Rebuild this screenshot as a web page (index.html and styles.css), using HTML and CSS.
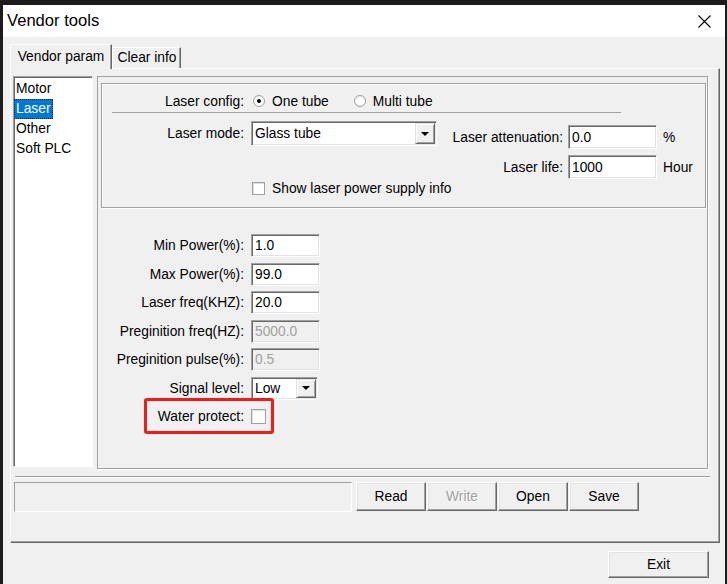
FILE: index.html
```html
<!DOCTYPE html>
<html lang="en">
<head>
    <meta charset="UTF-8">
    <title>Vendor tools</title>
    <link rel="stylesheet" href="styles.css">
</head>
<body>

<div class="window">
    <div class="titlebar">
        <span class="title">Vendor tools</span>
        <span class="close">
            <svg width="13" height="13" viewBox="0 0 13 13"><path d="M0.5 0.5 L12.5 12.5 M12.5 0.5 L0.5 12.5" stroke="#000" stroke-width="1.1" fill="none"/></svg>
        </span>
    </div>

    <div class="client">
        <div class="tabs">
            <div class="tab active">Vendor param</div>
            <div class="tab">Clear info</div>
        </div>

        <div class="pane">
            <div class="pane-main">
                <ul class="listbox">
                    <li><span>Motor</span></li>
                    <li class="sel"><span>Laser</span></li>
                    <li><span>Other</span></li>
                    <li><span>Soft PLC</span></li>
                </ul>

                <div class="page">
                    <div class="group">
                        <div class="cfg-row">
                            <span class="lbl">Laser config:</span>
                            <label class="radio"><span class="dot on"></span>One tube</label>
                            <label class="radio second"><span class="dot"></span>Multi tube</label>
                        </div>
                        <div class="sep"></div>
                        <div class="mode-row">
                            <div class="mode-left">
                                <span class="lbl">Laser mode:</span>
                                <div class="combo glass"><span class="val">Glass tube</span><span class="drop"></span></div>
                            </div>
                            <div class="atten">
                                <span class="lbl2">Laser attenuation:</span>
                                <div class="edit">0.0</div>
                                <span class="unit">%</span>
                                <span class="lbl2">Laser life:</span>
                                <div class="edit">1000</div>
                                <span class="unit">Hour</span>
                            </div>
                        </div>
                        <label class="check-row"><span class="box"></span>Show laser power supply info</label>
                    </div>

                    <div class="params">
                        <span class="lbl">Min Power(%):</span>
                        <div class="edit">1.0</div>
                        <span class="lbl">Max Power(%):</span>
                        <div class="edit">99.0</div>
                        <span class="lbl">Laser freq(KHZ):</span>
                        <div class="edit">20.0</div>
                        <span class="lbl">Preginition freq(HZ):</span>
                        <div class="edit disabled">5000.0</div>
                        <span class="lbl">Preginition pulse(%):</span>
                        <div class="edit disabled">0.5</div>
                        <span class="lbl">Signal level:</span>
                        <div class="combo small"><span class="val">Low</span><span class="drop"></span></div>
                        <span class="lbl">Water protect:</span>
                        <div class="cell"><span class="box big"></span></div>
                        <div class="mark"></div>
                    </div>
                </div>
            </div>

            <div class="etch"></div>

            <div class="actions">
                <div class="status"></div>
                <button class="btn">Read</button>
                <button class="btn off">Write</button>
                <button class="btn">Open</button>
                <button class="btn">Save</button>
            </div>
        </div>

        <div class="footer">
            <button class="btn exit">Exit</button>
        </div>
    </div>
</div>

</body>
</html>
```

FILE: styles.css
```css
body {
    margin: 0;
    padding: 5px 2px 0 3px;
    background-color: #1c1a1a;
    font-family: "Liberation Sans", Arial, sans-serif;
    font-size: 13.8px;
    color: #000;
    overflow: hidden;
}
.window {
    width: 722px;
    height: 579px;
    background-color: #f0f0f0;
}
.titlebar {
    height: 32px;
    background-color: #fff;
    display: flex;
    align-items: center;
    justify-content: space-between;
    padding: 0 14px 0 4px;
}
.title {
    font-size: 16.6px;
}
.close svg {
    display: block;
}
.client {
    padding: 7px 0 0 7px;
}

/* tabs */
.tabs {
    display: flex;
    align-items: flex-end;
    height: 24px;
}
.tab {
    box-sizing: border-box;
    height: 21px;
    width: 69px;
    line-height: 19px;
    text-align: center;
    border-top: 1px solid #fff;
    border-left: 1px solid #fff;
    border-right: 1px solid #696969;
    box-shadow: inset -1px 0 0 #a0a0a0;
    padding-left: 1px;
    white-space: nowrap;
}
.tab.active {
    position: relative;
    z-index: 1;
    width: 102px;
    height: 25px;
    line-height: 24px;
    margin-bottom: -1px;
    background-color: #f0f0f0;
    padding-left: 0;
}

/* tab page */
.pane {
    box-sizing: border-box;
    width: 710px;
    height: 475px;
    border-top: 1px solid #fff;
    border-left: 1px solid #fff;
    border-right: 1px solid #696969;
    border-bottom: 1px solid #696969;
    box-shadow: inset -1px -1px 0 #a0a0a0;
    padding: 7px 0 0 2px;
}
.pane-main {
    display: flex;
    align-items: flex-start;
    gap: 4px;
}
.listbox {
    box-sizing: border-box;
    list-style: none;
    margin: 0;
    padding: 1px 0 0 0;
    width: 80px;
    height: 391px;
    background-color: #fff;
    border-top: 1px solid #a0a0a0;
    border-left: 1px solid #a0a0a0;
    border-right: 1px solid #fff;
    border-bottom: 1px solid #fff;
    box-shadow: inset 1px 1px 0 #696969;
}
.listbox li {
    height: 20px;
}
.listbox li span {
    display: inline-block;
    line-height: 18px;
    padding: 0 1px;
    border: 1px solid transparent;
    margin-top: 1px;
}
.listbox li.sel span {
    background-color: #0078d7;
    color: #fff;
    border: 1px dotted #3a2a10;
}
.page {
    box-sizing: border-box;
    width: 611px;
    height: 393px;
    border: 1px solid #a0a0a0;
    box-shadow: 1px 1px 0 #fff;
}

/* laser config group */
.group {
    box-sizing: border-box;
    width: 605px;
    height: 125px;
    margin: 6px 0 0 3px;
    border: 1px solid #a0a0a0;
    box-shadow: inset 1px 1px 0 #fff, 1px 1px 0 #fff;
}
.lbl {
    text-align: right;
    white-space: nowrap;
}
.cfg-row {
    display: flex;
    align-items: center;
    height: 20px;
    margin-top: 7px;
}
.cfg-row .lbl,
.mode-left .lbl {
    box-sizing: border-box;
    width: 143px;
    padding-right: 1px;
}
.radio {
    display: flex;
    align-items: center;
    gap: 7px;
    margin-left: 8px;
}
.radio.second {
    margin-left: 25px;
}
.dot {
    box-sizing: border-box;
    width: 12px;
    height: 12px;
    border-radius: 50%;
    border: 1px solid #a0a0a0;
    background: radial-gradient(circle at 60% 60%, #fff 40%, #e2e2e2 100%);
    display: flex;
    align-items: center;
    justify-content: center;
}
.dot.on::after {
    content: "";
    width: 4px;
    height: 4px;
    border-radius: 50%;
    background-color: #000;
}
.sep {
    width: 509px;
    height: 1px;
    margin: 1px 0 0 10px;
    background-color: #a0a0a0;
}
.mode-row {
    display: flex;
    align-items: flex-start;
    margin-top: 8px;
}
.mode-left {
    display: flex;
    align-items: center;
}
.combo {
    box-sizing: border-box;
    display: flex;
    align-items: stretch;
    background-color: #fff;
    border-top: 1px solid #a0a0a0;
    border-left: 1px solid #a0a0a0;
    border-right: 1px solid #fff;
    border-bottom: 1px solid #fff;
    box-shadow: inset 1px 1px 0 #696969, inset -1px -1px 0 #e3e3e3;
    padding: 1px;
}
.combo.glass {
    width: 186px;
    height: 25px;
    margin-left: 6px;
}
.combo.small {
    width: 67px;
    height: 23px;
}
.combo .val {
    flex: 1;
    padding-left: 2px;
    display: flex;
    align-items: center;
}
.combo .drop {
    box-sizing: border-box;
    width: 20px;
    background-color: #f0f0f0;
    border-top: 1px solid #e3e3e3;
    border-left: 1px solid #e3e3e3;
    border-right: 1px solid #696969;
    border-bottom: 1px solid #696969;
    box-shadow: inset 1px 1px 0 #fff, inset -1px -1px 0 #a0a0a0;
    display: flex;
    align-items: center;
    justify-content: center;
}
.combo .drop::after {
    content: "";
    border-left: 4px solid transparent;
    border-right: 4px solid transparent;
    border-top: 4px solid #000;
}
.atten {
    display: grid;
    grid-template-columns: 120px 89px auto;
    grid-auto-rows: 24px;
    column-gap: 5px;
    row-gap: 6px;
    align-items: center;
    margin: 4px 0 0 6px;
}
.lbl2 {
    text-align: right;
    white-space: nowrap;
}
.unit {
    margin-left: 1px;
}
.edit {
    box-sizing: border-box;
    height: 100%;
    background-color: #fff;
    border-top: 1px solid #a0a0a0;
    border-left: 1px solid #a0a0a0;
    border-right: 1px solid #fff;
    border-bottom: 1px solid #fff;
    box-shadow: inset 1px 1px 0 #696969, inset -1px -1px 0 #e3e3e3;
    padding-left: 3px;
    display: flex;
    align-items: center;
}
.edit.disabled {
    background-color: #f0f0f0;
    color: #a0a0a0;
}
.check-row {
    display: flex;
    align-items: center;
    gap: 7px;
    margin: 3px 0 0 150px;
    height: 13px;
}
.box {
    box-sizing: border-box;
    display: block;
    width: 13px;
    height: 13px;
    background-color: #fff;
    border: 1px solid #a0a0a0;
    box-shadow: inset 1px 1px 0 #e0e0e0;
}
.box.big {
    width: 15px;
    height: 15px;
}

/* lower parameter list */
.params {
    position: relative;
    display: grid;
    grid-template-columns: 146px 69px;
    grid-auto-rows: 23px;
    column-gap: 7px;
    row-gap: 5.5px;
    align-items: center;
    margin-top: 26px;
}
.params .edit {
    height: 23px;
}
.cell {
    display: flex;
    align-items: center;
}
.mark {
    position: absolute;
    left: 46px;
    top: 164px;
    width: 130px;
    height: 36px;
    box-sizing: border-box;
    border: 3px solid #f21b1b;
    border-radius: 3px;
}

/* bottom controls */
.etch {
    width: 695px;
    height: 0;
    margin: 7px 0 0 2px;
    border-top: 1px solid #a0a0a0;
    border-bottom: 1px solid #fff;
}
.actions {
    display: flex;
    align-items: flex-start;
    gap: 1px;
    margin: 4px 0 0 1px;
}
.status {
    box-sizing: border-box;
    width: 338px;
    height: 30px;
    margin-right: 3px;
    border-top: 1px solid #a0a0a0;
    border-left: 1px solid #a0a0a0;
    border-right: 1px solid #fff;
    border-bottom: 1px solid #fff;
}
.btn {
    box-sizing: border-box;
    width: 70px;
    height: 29px;
    font-family: "Liberation Sans", Arial, sans-serif;
    font-size: 13.8px;
    color: #000;
    background-color: #f0f0f0;
    border-top: 1px solid #fff;
    border-left: 1px solid #fff;
    border-right: 1px solid #696969;
    border-bottom: 1px solid #696969;
    box-shadow: inset -1px -1px 0 #a0a0a0, inset 1px 1px 0 #e3e3e3;
    padding: 0;
}
.btn.off {
    color: #a0a0a0;
    text-shadow: 1px 1px 0 #fff;
}
.footer {
    display: flex;
    justify-content: flex-end;
    padding-right: 16px;
    margin-top: 8px;
}
.btn.exit {
    width: 101px;
    height: 27px;
}
```
